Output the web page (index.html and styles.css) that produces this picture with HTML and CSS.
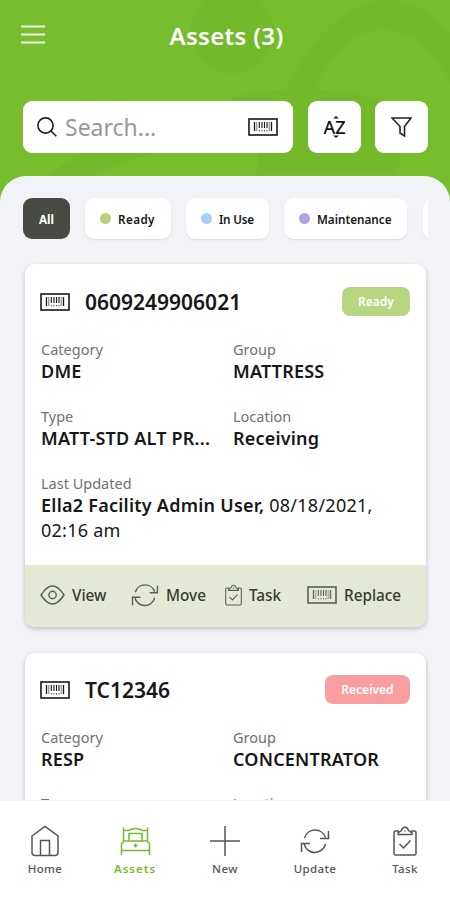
FILE: index.html
```html
<!DOCTYPE html>
<html lang="en">
<head>
<meta charset="utf-8">
<title>Assets</title>
<link rel="stylesheet" href="styles.css">
</head>
<body>
<svg class="defs" aria-hidden="true">
  <symbol id="barcode" viewBox="0 0 30 18"><rect x="1" y="1" width="28" height="16" fill="none" stroke="currentColor" stroke-width="1.6"/><path d="M6.5 4v9M23.5 4v9" stroke="currentColor" stroke-width="1.3"/><path d="M8.8 4v9M21.2 4v9" stroke="currentColor" stroke-width=".6"/><path d="M11.3 4v6M14 4v6M16.5 4v6M19 4v6" stroke="currentColor" stroke-width="1.1"/><path d="M11.3 12v1.4M14 12v1.4M16.5 12v1.4M19 12v1.4" stroke="currentColor" stroke-width=".8"/></symbol>
  <symbol id="refresh" viewBox="0 0 30 26"><path d="M4.5 10A11 11 0 0 1 25.5 9.500M25.500 16A11 11 0 0 1 4 15.500M28.500 3v7.500h-8.500M1.500 24v-8.500h8.500" fill="none" stroke="currentColor" stroke-width="1.5"/></symbol>
  <symbol id="clipboard" viewBox="0 0 24 30"><path d="M6 5H2.500a1.500 1.500 0 0 0-1.500 1.500v21a1.500 1.500 0 0 0 1.500 1.500h19a1.500 1.500 0 0 0 1.500-1.500v-21a1.500 1.500 0 0 0-1.500-1.500H18M5 8.500V7l3.500-2.500C9.500 0 14.500 0 15.500 4.500L19 7v1.500zM6.500 18l4 4 7-7.500" fill="none" stroke="currentColor" stroke-width="1.5"/><circle cx="12" cy="5" r=".8" fill="currentColor"/></symbol>
</svg>
<div class="app">
  <header class="header">
    <svg class="backdrop" viewBox="0 0 450 200"><circle cx="232" cy="32" r="42"/><path d="M285 90C306 48 339 4 380 0c31-3 59 20 70 33v50c-18-34-37-53-68-53-32 0-55 30-66 60 30 0 65 5 90 25l-8 60H256c5-25 0-50-26-77 15-6 36-8 55-8z"/><path d="M50 176q15-16 35-24h70l-65 24z"/></svg>
    <div class="topbar">
      <svg class="menu" viewBox="0 0 26 20"><path d="M1 1.500h24M1 9.500h24M1 17.500h24"/></svg>
      <h1>Assets (3)</h1>
    </div>
    <div class="tools">
      <div class="search">
        <svg class="lens" viewBox="0 0 20 20"><circle cx="8.500" cy="8.500" r="7.600"/><path d="M14 14l5.300 5.300"/></svg>
        <span class="placeholder">Search...</span>
        <svg class="code"><use href="#barcode"/></svg>
      </div>
      <button class="tool"><span class="sort">AZ</span><svg class="tick" viewBox="0 0 6 22"><path d="M0 2.500L3 0l3 2.500zM0 19.500L3 22l3-2.500z"/></svg></button>
      <button class="tool"><svg class="funnel" viewBox="0 0 21 20"><path d="M1 1h19l-6.500 8.500V19L9 16V9.500z"/></svg></button>
    </div>
  </header>
  <main class="panel">
    <div class="chips">
      <span class="chip all">All</span>
      <span class="chip ready"><i></i><b>Ready</b></span>
      <span class="chip use"><i></i><b>In Use</b></span>
      <span class="chip maint"><i></i><b>Maintenance</b></span>
      <span class="chip next"></span>
    </div>
    <article class="card">
      <div class="body">
        <div class="title"><svg class="code"><use href="#barcode"/></svg><h2>0609249906021</h2><span class="status">Ready</span></div>
        <dl>
          <div><dt>Category</dt><dd>DME</dd></div>
          <div><dt>Group</dt><dd>MATTRESS</dd></div>
          <div><dt>Type</dt><dd>MATT-STD ALT PR...</dd></div>
          <div><dt>Location</dt><dd>Receiving</dd></div>
          <div class="wide"><dt>Last Updated</dt><dd>Ella2 Facility Admin User, <span>08/18/2021,<br>02:16 am</span></dd></div>
        </dl>
      </div>
      <footer class="actions">
        <span class="view"><svg viewBox="0 0 25 20"><path d="M1 10Q12.500-8 24 10 12.500 28 1 10z" fill="none" stroke="currentColor" stroke-width="1.400"/><circle cx="12.500" cy="10" r="3.700" fill="none" stroke="currentColor" stroke-width="1.400"/></svg>View</span>
        <span class="move"><svg><use href="#refresh"/></svg>Move</span>
        <span class="task"><svg><use href="#clipboard"/></svg>Task</span>
        <span class="replace"><svg><use href="#barcode"/></svg>Replace</span>
      </footer>
    </article>
    <article class="card">
      <div class="body">
        <div class="title"><svg class="code"><use href="#barcode"/></svg><h2 class="tc">TC12346</h2><span class="status received">Received</span></div>
        <dl>
          <div><dt>Category</dt><dd>RESP</dd></div>
          <div><dt>Group</dt><dd>CONCENTRATOR</dd></div>
          <div><dt>Type</dt><dd></dd></div>
          <div><dt>Location</dt><dd></dd></div>
        </dl>
      </div>
    </article>
  </main>
  <nav class="nav">
    <a><svg viewBox="0 0 28 32"><path d="M1 11L14 1.500 27 11v16.500a3 3 0 0 1-3 3H4a3 3 0 0 1-3-3zM9.500 30V15.500h9V30"/></svg>Home</a>
    <a class="active"><svg class="bed" viewBox="0 0 31 30"><path d="M3.500 15V1.500M27.500 15V1.500M3.500 4.500h5q7-4 14 0h5M9 15V7.500h13V15M1.500 29V17.500L4 15h23l2.500 2.500V29M1.500 24.500h28M15.500 17.500v4M13.500 19.500h4"/></svg>Assets</a>
    <a><svg class="plus" viewBox="0 0 30 30"><path d="M15 0v30M0 15h30"/></svg>New</a>
    <a><svg class="update"><use href="#refresh"/></svg>Update</a>
    <a><svg class="clip"><use href="#clipboard"/></svg>Task</a>
  </nav>
</div>
</body>
</html>
```

FILE: styles.css
```css
* { box-sizing: border-box; }
body { margin: 0; font-family: "Noto Sans", "Open Sans", sans-serif; color: #171717; }
svg { display: block; flex: none; }
h1, h2, dl, dd { margin: 0; }
.defs { position: absolute; width: 0; height: 0; }
.app { width: 450px; height: 900px; overflow: hidden; display: flex; flex-direction: column; background: #78bd2e; }
.header { position: relative; height: 176px; flex: none; }
.backdrop { position: absolute; left: 0; top: 0; width: 450px; height: 200px; fill: #71b52b; opacity: .45; }
.topbar { position: relative; height: 101px; padding-top: 20px; }
.menu { position: absolute; left: 20px; top: 25px; width: 26px; height: 20px; fill: none; stroke: #f4fbe9; stroke-width: 1.8; }
h1 { text-align: center; padding-left: 3px; font-size: 24px; line-height: 31px; color: #fff; font-weight: 650; letter-spacing: .3px; }
.tools { position: relative; display: flex; gap: 15px; padding-left: 23px; }
.search { width: 270px; height: 52px; border-radius: 9px; background: #fff; display: flex; align-items: center; padding: 0 15px 0 14px; }
.lens { width: 20px; height: 20px; fill: none; stroke: #222; stroke-width: 1.6; }
.placeholder { margin-left: 8px; font-size: 23px; color: #999; flex: 1; line-height: 50px; }
.code { width: 30px; height: 18px; }
.tool { position: relative; width: 53px; height: 52px; border: 0; border-radius: 9px; background: #fff; padding: 0; display: flex; align-items: center; justify-content: center; font-family: inherit; }
.tool + .tool { margin-left: -1px; }
.sort { font-size: 18px; font-weight: 500; color: #111; }
.tick { position: absolute; left: 25px; top: 15px; width: 6px; height: 22px; fill: #222; }
.funnel { width: 21px; height: 20px; fill: none; stroke: #222; stroke-width: 1.6; }
.panel { position: relative; flex: 1; min-height: 0; overflow: hidden; background: #f1f3f7; border-radius: 26px 26px 0 0; padding: 22px 24px 0 23px; }
.chips { display: flex; height: 48px; overflow: hidden; margin-right: -2px; }
.chip { height: 41px; flex: none; display: flex; align-items: center; background: #fff; border-radius: 9px; font-size: 11.7px; box-shadow: 0 1px 2px #0000001a; padding-left: 15px; }
.chip i { width: 11px; height: 11px; border-radius: 50%; margin-right: 7px; }
.chip b { padding-top: 1px; font-weight: 600; }
.all { width: 47px; background: #474a43; color: #fff; font-weight: 700; margin-right: 15px; padding: 1px 0 0; justify-content: center; box-shadow: none; }
.ready { width: 86px; margin-right: 15px; }
.ready i { background: #b5d27b; }
.ready b { letter-spacing: .4px; }
.use { width: 83px; margin-right: 15px; }
.use i { background: #a9d1f8; }
.use b { letter-spacing: -.2px; }
.maint { width: 123px; margin-right: 16px; }
.maint i { background: #b2a2df; }
.next { width: 80px; }
.card { margin: 18px 0 0 2px; width: 401px; border-radius: 10px; background: #fff; overflow: hidden; box-shadow: 0 2px 5px #00000038; }
.card + .card { margin-top: 26px; }
.card + .card .body { padding-top: 19px; }
.body { padding: 20px 16px 23px 15px; }
.title { display: flex; height: 35px; align-items: center; }
h2 { margin-left: 15px; flex: 1; font-size: 21px; line-height: 28px; font-weight: 600; }
.status { height: 29px; width: 68px; border-radius: 8px; background: #b8d582; color: #fff; font-size: 12px; font-weight: 600; line-height: 29px; text-align: center; }
.received { width: 85px; background: #f99e9e; }
dl { margin-top: 20px; padding-left: 1px; display: grid; grid-template-columns: 192px 1fr; row-gap: 23px; }
.card + .card dl { row-gap: 22px; }
.wide { grid-column: 1 / 3; }
dt { font-size: 14.500px; line-height: 20px; color: #717171; }
dd { font-size: 18px; line-height: 24px; font-weight: 600; white-space: nowrap; min-height: 24px; letter-spacing: .2px; }
.wide dd { line-height: 24.5px; letter-spacing: .25px; }
dd span { font-weight: 400; }
.actions { height: 62px; background: #e4e9d6; display: flex; padding: 0 0 2px 15px; font-size: 15.300px; font-weight: 500; color: #353b30; }
.actions span { display: flex; align-items: center; }
.actions svg { color: #586151; }
.view { width: 91px; gap: 7px; }
.view svg { width: 25px; height: 20px; }
.move { width: 94px; gap: 7px; }
.move svg { width: 28px; height: 24px; }
.task { width: 82px; gap: 7px; }
.task svg { width: 17px; height: 22px; }
.replace { gap: 7px; }
.replace svg { width: 30px; height: 18px; }
.nav { position: relative; height: 100px; flex: none; display: grid; grid-template-columns: repeat(5, 90px); background: #fff; border-top: 1px solid #f5f6f8; }
.nav a { display: grid; grid-template-rows: 32px 20px; row-gap: 2px; align-content: start; align-items: center; justify-items: center; padding-top: 24px; font-size: 11.500px; line-height: 20px; letter-spacing: .4px; font-weight: 500; color: #555; }
.nav svg { width: 28px; height: 32px; fill: none; stroke: currentColor; stroke-width: 1.500; }
.nav .active { color: #74bb2c; font-weight: 600; letter-spacing: 1px; }
.nav .bed { width: 31px; height: 30px; }
.nav .plus { width: 30px; height: 30px; }
.nav .update { width: 30px; height: 26px; stroke: none; }
.nav .clip { width: 24px; height: 30px; stroke: none; }
```
